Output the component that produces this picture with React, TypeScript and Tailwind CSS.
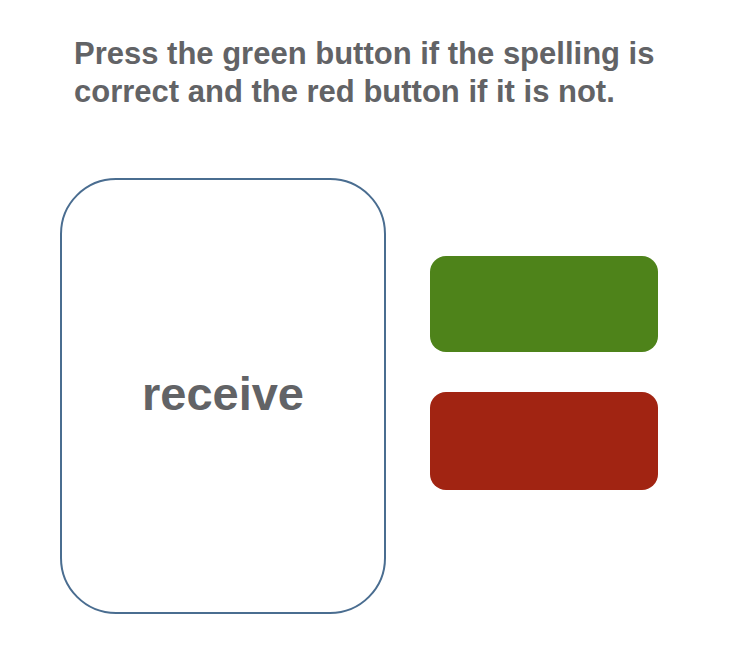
export default function App() {
  return (
    <main className="min-h-screen bg-white font-['Liberation_Sans',Arial,sans-serif] font-bold text-[#626366]">
      <div className="mx-auto w-full max-w-[734px] pt-[35px] pr-[76px] pl-[60px]">
        <h1 className="pl-[14px] text-[31px] leading-[38px]">
          Press the green button if the spelling is correct and the red button if it is not.
        </h1>
        <div className="grid grid-cols-[326fr_228fr] items-center gap-11 pt-[67px]">
          <section className="flex min-h-[436px] items-center justify-center rounded-[56px] border-2 border-[#4a6d90]">
            <p className="pb-1 text-[47px] leading-[54px]">receive</p>
          </section>
          <div className="flex flex-col gap-10 pb-[46px]">
            <button type="button" aria-label="Correct" className="h-24 w-full rounded-2xl bg-[#4e831a]" />
            <button type="button" aria-label="Incorrect" className="h-[98px] w-full rounded-2xl bg-[#a12412]" />
          </div>
        </div>
      </div>
    </main>
  );
}
